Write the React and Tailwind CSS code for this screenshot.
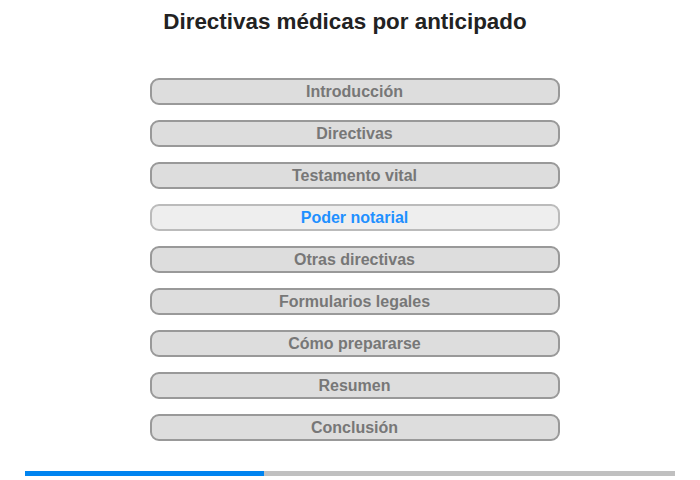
const ITEMS = [
  'Introducción',
  'Directivas',
  'Testamento vital',
  'Poder notarial',
  'Otras directivas',
  'Formularios legales',
  'Cómo prepararse',
  'Resumen',
  'Conclusión',
]

const ACTIVE = 3

export default function App() {
  return (
    <div className="w-[700px] h-[480px] bg-white flex flex-col font-['Liberation_Sans',Arial,sans-serif]">
      <h1 className="text-[22.4px] font-bold text-[#222] text-center pt-[9px] leading-[26px] pr-[10px]">
        Directivas médicas por anticipado
      </h1>

      <div className="flex flex-col items-center gap-[15px] mt-[43px] pl-[9px]">
        {ITEMS.map((label, i) => (
          <button
            key={label}
            className={[
              'w-[410px] h-[27px] rounded-[9px] border-2 text-[16px] font-bold leading-none',
              i === ACTIVE
                ? 'bg-[#eeeeee] border-[#bbbbbb] text-[#1e90ff]'
                : 'bg-[#dddddd] border-[#999999] text-[#777777]',
            ].join(' ')}
          >
            {label}
          </button>
        ))}
      </div>

      <div className="mx-[25px] mt-[30px] h-[5px] bg-[#c0c0c0] flex">
        <div className="w-[239px] h-full bg-[#0084f0]" />
      </div>
    </div>
  )
}
